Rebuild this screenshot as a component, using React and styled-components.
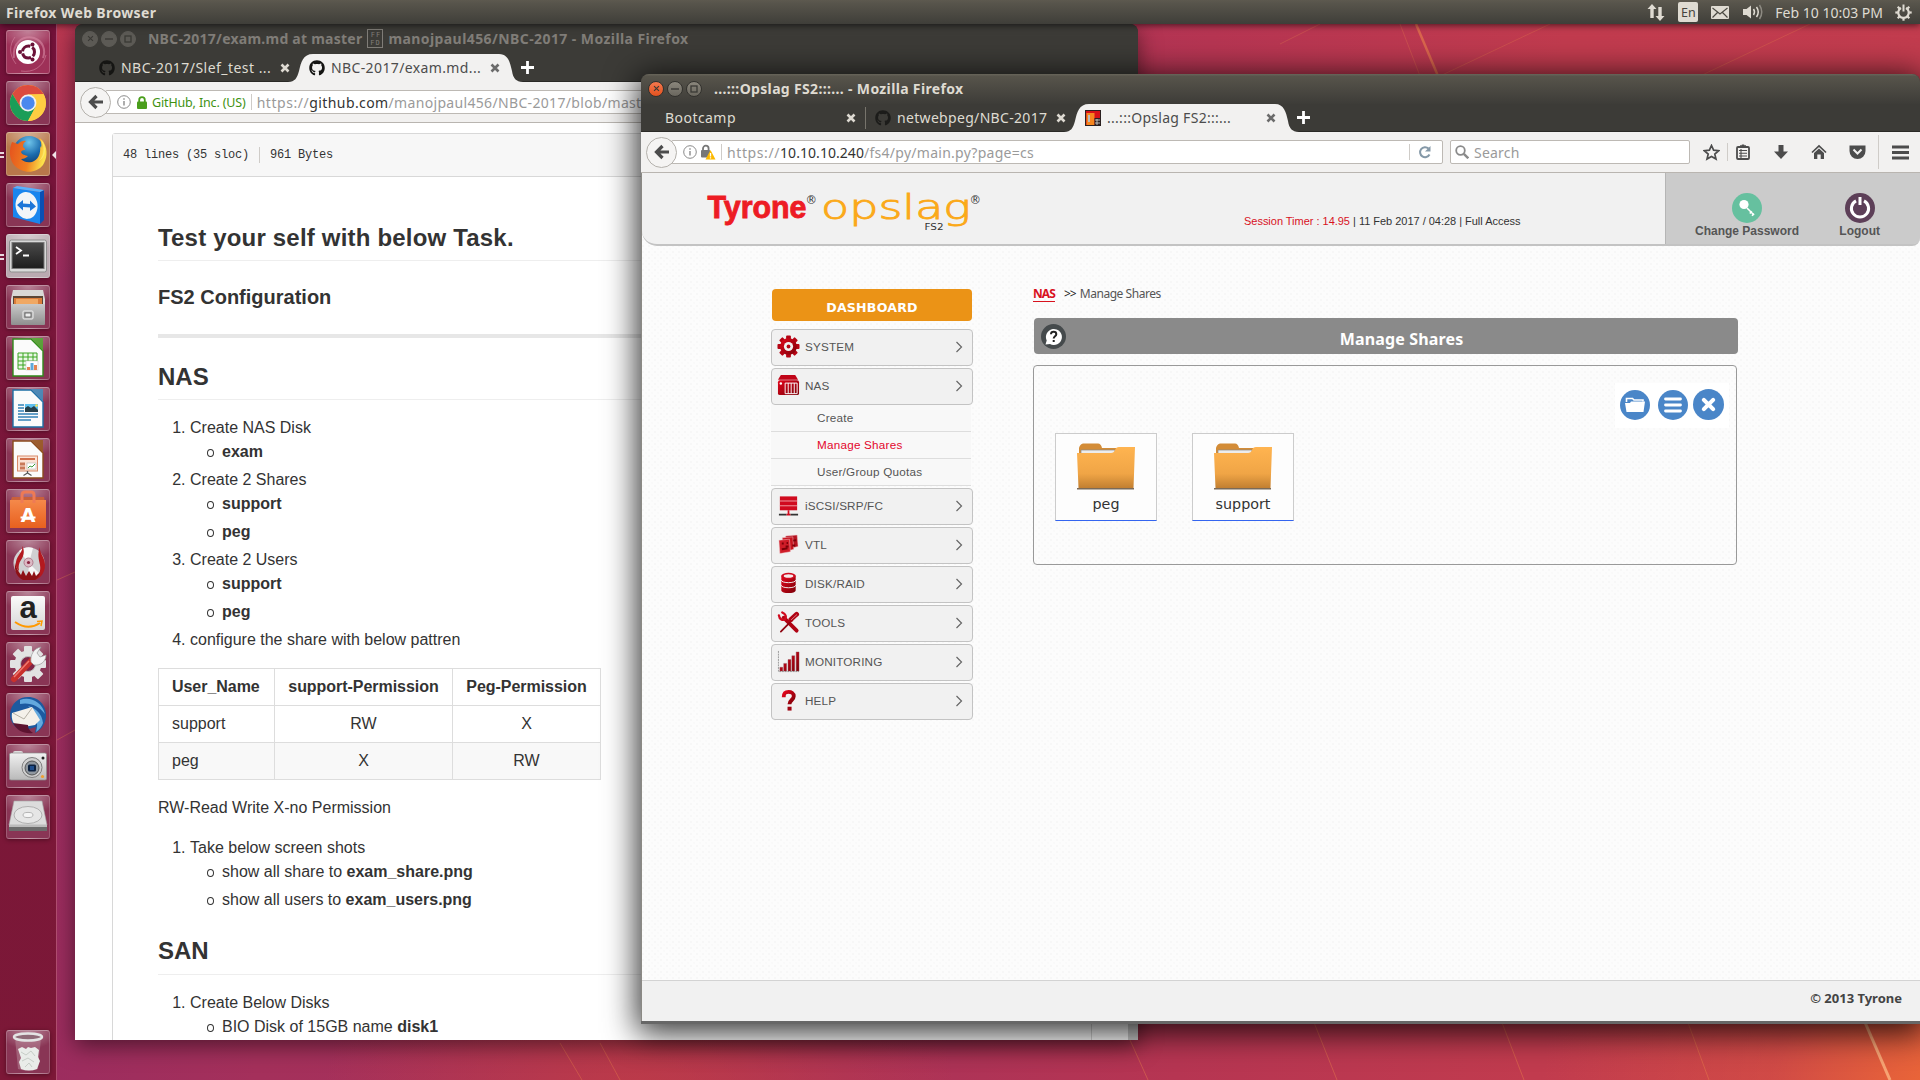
import React from 'react';
import styled, { createGlobalStyle } from 'styled-components';
import { FaGithub } from 'react-icons/fa';

const UI = '"Noto Sans", "Open Sans", sans-serif';
const SANS = '"Liberation Sans", Arial, sans-serif';

const Global = createGlobalStyle`
  *, *::before { box-sizing: border-box; }
  body { margin: 0; background: #7a1639; font-family: ${UI}; overflow: hidden; }
  svg { display: block; flex: none; }
`;

/* ---------- desktop ---------- */
const Desktop = styled.div`
  position: relative;
  width: 1920px;
  height: 1080px;
  overflow: hidden;
  display: flex;
  flex-direction: column;
  background:
    radial-gradient(circle 420px at 1960px 1110px, rgba(244, 112, 50, 0.95), rgba(226, 92, 60, 0.45) 45%, transparent),
    radial-gradient(circle 320px at 640px 1130px, rgba(205, 66, 58, 0.6), transparent),
    radial-gradient(ellipse 60px 260px at 60px 20px, rgba(200, 60, 75, 0.75), transparent),
    linear-gradient(92deg, #982b60 0%, #a4305b 15%, #aa3259 45%, #b63552 62%, #c13b4e 80%, #c23c4e 100%);
`;
const Rays = styled.svg`
  position: absolute;
  inset: 0;
`;
const TopPanel = styled.header`
  position: relative;
  z-index: 5;
  height: 24px;
  padding: 0 8px 0 6px;
  display: flex;
  align-items: center;
  justify-content: space-between;
  color: #dfdbd2;
  background: linear-gradient(#5d594f, #57544b 15%, #3f3e39);
  box-shadow: 0 1px 7px rgba(0, 0, 0, 0.65);
`;
const Text = styled.span`
  font-size: ${(p) => p.$size || 14}px;
  font-weight: ${(p) => (p.$bold ? 700 : 400)};
  letter-spacing: ${(p) => p.$ls || 0}px;
  color: ${(p) => p.$color || 'inherit'};
  white-space: pre;
`;
const Indicators = styled.div`
  display: flex;
  align-items: center;
`;
const Indicator = styled.div`
  margin-right: ${(p) => p.$after || 0}px;
`;
const Keyboard = styled.div`
  width: 20px;
  height: 20px;
  margin-right: 13px;
  border-radius: 2px;
  background: #dfdbd2;
  color: #45433d;
  font-size: 12.5px;
  line-height: 21px;
  text-align: center;
`;
const Launcher = styled.nav`
  position: relative;
  z-index: 4;
  width: 57px;
  flex: 1;
  padding: 6px 6px 6px;
  display: flex;
  flex-direction: column;
  gap: 7px;
  background: linear-gradient(#74123a, #79163a 30%, #7c1837);
  border-right: 1px solid rgba(225, 130, 165, 0.5);
`;
const Tile = styled.div`
  position: relative;
  width: 44px;
  height: 44px;
  flex: none;
  display: grid;
  place-items: center;
  border-radius: 3px;
  border: 1px solid rgba(255, 255, 255, 0.18);
  border-top-color: rgba(255, 255, 255, 0.45);
  background: radial-gradient(ellipse 30px 18px at 50% 0, rgba(255, 255, 255, 0.45), rgba(255, 255, 255, 0.08)), ${(p) => p.$bg || '#7f2446'};
  box-shadow: 0 1px 4px rgba(30, 0, 10, 0.45);
  ${(p) => (p.$last ? 'margin-top: auto;' : '')}
`;
const Pips = styled.div`
  position: absolute;
  left: -7px;
  top: 19px;
  width: 4px;
  height: 6px;
  border-top: 2px solid #e8d8de;
  border-bottom: 2px solid #e8d8de;
`;
const Focus = styled.div`
  position: absolute;
  right: -7px;
  top: 18px;
  border: 4px solid transparent;
  border-left: 0;
  border-right: 4px solid #f0e4e8;
`;

/* ---------- windows ---------- */
const Window = styled.section`
  position: absolute;
  left: ${(p) => p.$x}px;
  top: ${(p) => p.$y}px;
  width: ${(p) => p.$w}px;
  height: ${(p) => p.$h}px;
  z-index: ${(p) => (p.$active ? 3 : 2)};
  display: flex;
  flex-direction: column;
  border-radius: 8px 8px 0 0;
  background: #3c3b37;
  ${(p) => (p.$active ? 'border-bottom: 3px solid #676767;' : '')}
  box-shadow: ${(p) => (p.$active ? '0 5px 32px 4px rgba(0,0,0,0.8)' : '0 6px 22px rgba(0,0,0,0.5)')};
`;
const TitleBar = styled.div`
  height: 30px;
  padding: 0 0 1px 7px;
  display: flex;
  align-items: center;
  gap: 3px;
  border-radius: 8px 8px 0 0;
  color: ${(p) => (p.$active ? '#dfdbd2' : '#807d78')};
  background: ${(p) => (p.$active ? 'linear-gradient(#68655a, #57544b 8%, #3d3c38)' : '#3c3b37')};
`;
const WinButton = styled.div`
  width: 16px;
  height: 16px;
  border-radius: 50%;
  display: grid;
  place-items: center;
  color: #3a3935;
  background: ${(p) => (p.$close ? 'linear-gradient(#f4784e, #e2521f)' : p.$active ? 'linear-gradient(#8a867c, #6a675e)' : '#5c5a55')};
  border: 1px solid ${(p) => (p.$active ? '#33322e' : '#5c5a55')};
`;
const WinTitle = styled.div`
  margin: 0 0 1px 9px;
  display: flex;
  align-items: center;
  gap: 5px;
`;
const MissingGlyph = styled.span`
  width: 16px;
  height: 19px;
  padding-top: 1px;
  border: 1px solid currentColor;
  font: 7px/8px "DejaVu Sans Mono", monospace;
  letter-spacing: 1px;
  text-indent: 1px;
  text-align: center;
`;
const TabStrip = styled.div`
  height: 28px;
  padding-left: 14px;
  display: flex;
  border-bottom: 1px solid #2a2926;
`;
const TabBox = styled.div`
  position: relative;
  width: 210px;
  height: 28px;
  padding: 0 9px 0 10px;
  display: flex;
  align-items: center;
  color: ${(p) => (p.$active ? '#4c4c4c' : '#dfdbd2')};
`;
const TabShape = styled.svg`
  position: absolute;
  left: -11px;
  top: 0;
`;
const TabInner = styled.div`
  position: relative;
  flex: 1;
  margin-top: -1px;
  display: flex;
  align-items: center;
  gap: 6px;
`;
const TabClose = styled.div`
  margin-left: auto;
  color: ${(p) => (p.$active ? '#6b6b6b' : '#dedad2')};
`;
const TabRule = styled.div`
  width: 1px;
  height: 22px;
  margin: 3px -1px 0 0;
  background: #77746c;
`;
const NewTab = styled.div`
  margin: 7px 0 0 12px;
`;
const ToolBar = styled.div`
  height: 41px;
  padding: 0 12px 0 5px;
  display: flex;
  align-items: center;
  background: #f2f1f0;
  border-bottom: 1px solid #b9b5b0;
`;
const Back = styled.div`
  position: relative;
  z-index: 1;
  width: 31px;
  height: 31px;
  flex: none;
  border-radius: 50%;
  border: 1px solid #b4b1ac;
  background: #f5f4f3;
  display: grid;
  place-items: center;
`;
const Field = styled.div`
  height: 24px;
  width: ${(p) => p.$w}px;
  flex: none;
  margin-left: ${(p) => p.$ml}px;
  padding-left: ${(p) => p.$pl}px;
  display: flex;
  align-items: center;
  border: 1px solid #bdb9b4;
  border-radius: 2px;
  background: #fff;
  color: #9a9a9a;
`;
const Glyph = styled.div`
  margin: 0 ${(p) => p.$r || 0}px 0 ${(p) => p.$l || 0}px;
`;
const Rule = styled.div`
  width: 1px;
  height: ${(p) => p.$h || 16}px;
  margin: 0 ${(p) => p.$r || 0}px 0 ${(p) => p.$l || 0}px;
  background: #cfccc8;
`;
const Reload = styled.div`
  margin-left: auto;
  display: flex;
  align-items: center;
  gap: 8px;
  padding-right: 10px;
`;
const ToolIcons = styled.div`
  flex: 1;
  display: flex;
  align-items: center;
  margin-left: 13px;
`;

/* ---------- readme page ---------- */
const Page = styled.div`
  flex: 1;
  min-height: 0;
  display: flex;
  background: #fff;
  overflow: hidden;
`;
const Scroll = styled.div`
  width: 10px;
  background: #cecece;
`;
const FileBox = styled.div`
  flex: 1;
  margin: 10px 36px -10px 37px;
  border: 1px solid #d8d8d8;
  border-radius: 3px;
`;
const FileHeader = styled.div`
  height: 43px;
  padding-left: 10px;
  display: flex;
  align-items: center;
  background: #f7f7f7;
  border-bottom: 1px solid #d8d8d8;
  font-family: "Liberation Mono", monospace;
  color: #333;
`;
const Markdown = styled.article`
  padding: 46px 45px 45px;
  font: 16px/24px ${SANS};
  color: #333;
  > :first-child { margin-top: 0; }
`;
const H2 = styled.h2`
  margin: 24px 0 16px;
  padding-bottom: 7.2px;
  font-size: 24px;
  line-height: 30px;
  letter-spacing: ${(p) => p.$ls || 0}px;
  border-bottom: 1px solid #eee;
`;
const H3 = styled.h3`
  margin: 24px 0 16px;
  font-size: 20px;
  line-height: 25px;
`;
const Hr = styled.hr`
  height: 4px;
  margin: 24px 0;
  border: 0;
  background: #e7e7e7;
`;
const Ol = styled.ol`
  margin: 0 0 16px;
  padding-left: 32px;
  li + li { margin-top: 4px; }
`;
const Ul = styled.ul`
  margin: 0;
  padding-left: 32px;
  list-style: none;
  li::before {
    content: '';
    display: inline-block;
    width: 7px;
    height: 8px;
    margin: 0 8px 0 -15px;
    border: 1px solid #333;
    border-radius: 50%;
  }
`;
const Table = styled.table`
  width: 443px;
  table-layout: fixed;
  border-collapse: collapse;
  margin: 0 0 16px;
  tr:last-child td { background: #f8f8f8; }
`;
const Cell = styled.td`
  width: ${(p) => p.$w}px;
  height: 37px;
  padding: 6px 13px 6px;
  border: 1px solid #ddd;
  text-align: ${(p) => (p.$left ? 'left' : 'center')};
  font-weight: ${(p) => (p.$head ? 700 : 400)};
  letter-spacing: ${(p) => (p.$head ? -0.04 : 0)}px;
  white-space: nowrap;
`;
const P = styled.p`
  margin: 0 0 16px;
`;

/* ---------- storage console ---------- */
const Console = styled.div`
  flex: 1;
  min-height: 0;
  display: flex;
  flex-direction: column;
  border-left: 1px solid #8b8984;
  font-family: ${SANS};
  background:
    radial-gradient(circle 1px at 1px 1px, #f7f7f7 70%, transparent) 0 0 / 6px 6px,
    radial-gradient(circle 1px at 4px 4px, #f9f9f9 70%, transparent) 0 0 / 6px 6px, #fcfcfc;
`;
const Banner = styled.div`
  height: 73px;
  display: flex;
  background: #f1f1f1;
  border-bottom: 2px solid #c3c3c3;
  border-radius: 0 0 8px 15px;
`;
const Logo = styled.svg`
  margin: 15px 0 0 64px;
  overflow: visible;
`;
const Session = styled.div`
  margin: 42px 0 0 auto;
  width: 421px;
  font-size: 11px;
  line-height: 13px;
  letter-spacing: -0.02px;
  color: #333;
  white-space: pre;
`;
const Red = styled.span`
  color: #d8121e;
`;
const Account = styled.div`
  width: 255px;
  padding: 20px 40px 0 29px;
  display: flex;
  justify-content: space-between;
  background: #cbcbcb;
  border-left: 1px solid #b5b5b5;
  border-radius: 0 0 6px 0;
`;
const AccountLink = styled.div`
  display: flex;
  flex-direction: column;
  align-items: center;
  gap: 1px;
  font-size: 12px;
  line-height: 14px;
  font-weight: 700;
  color: #555;
`;
const Body = styled.div`
  flex: 1;
  display: flex;
  align-items: flex-start;
  padding-left: 129px;
  gap: 60px;
`;
const Side = styled.aside`
  width: 202px;
  margin-top: 43px;
`;
const Dashboard = styled.div`
  height: 32px;
  margin: 0 1px 8px;
  padding-top: 4px;
  border-radius: 4px;
  background: #eb9316;
  color: #fff;
  font: 700 12.6px/30px "DejaVu Sans", sans-serif;
  letter-spacing: 0.2px;
  text-align: center;
`;
const MenuItem = styled.div`
  height: 37px;
  margin-bottom: 2px;
  padding: 0 9px 2px 5px;
  display: flex;
  align-items: center;
  border: 1px solid #c3c3c3;
  border-radius: 4px;
  background: #f1f1f1;
  font-size: 11.7px;
  letter-spacing: 0.17px;
  color: #555;
  svg:last-child { margin-left: auto; }
`;
const MenuLabel = styled.span`
  margin-left: 5px;
`;
const SubMenu = styled.div`
  margin: -2px 2px 2px 0;
  background: #f8f8f8;
`;
const SubItem = styled.div`
  height: 27px;
  padding-left: 46px;
  border-bottom: 1px solid #ddd;
  font-size: 11.7px;
  line-height: 26px;
  letter-spacing: 0.23px;
  color: ${(p) => (p.$on ? '#e3062c' : '#555')};
`;
const Main = styled.main`
  width: 705px;
  margin-top: 39px;
`;
const Crumbs = styled.div`
  height: 18px;
  margin-bottom: 15px;
  display: flex;
  font: 12px/18px ${UI};
  letter-spacing: -0.45px;
  color: #555;
`;
const CrumbLink = styled.b`
  height: 17px;
  letter-spacing: -0.9px;
  color: #d8121e;
  border-bottom: 1px solid #d8121e;
`;
const CrumbSep = styled.span`
  margin: 0 4px 0 9px;
  color: #222;
  letter-spacing: -1px;
`;
const Heading = styled.div`
  height: 36px;
  margin: 0 0 11px 1px;
  padding-left: 7px;
  display: flex;
  align-items: center;
  border-radius: 4px;
  background: #8a8a8a;
  color: #fff;
`;
const HeadingText = styled.h1`
  margin: 5px 1px 0 0;
  flex: 1;
  text-align: center;
  font: 700 16px/24px ${UI};
  letter-spacing: 0.15px;
`;
const Panel = styled.div`
  width: 704px;
  height: 200px;
  border: 1px solid #999;
  border-radius: 4px;
  padding: 17px 7px 0 21px;
`;
const Actions = styled.div`
  width: 114px;
  height: 45px;
  margin: 0 0 5px auto;
  padding: 0 5px 2px;
  display: flex;
  align-items: center;
  background: #fff;
  gap: 8px;
  svg:last-child { margin-left: -3px; }
`;
const Shares = styled.div`
  display: flex;
  gap: 35px;
`;
const Share = styled.div`
  width: 102px;
  height: 88px;
  padding-top: 8px;
  display: flex;
  flex-direction: column;
  align-items: center;
  gap: 4px;
  border: 1px solid #ccc;
  border-bottom-color: #3465f0;
  background: #fdfdfd;
  font: 14.3px/20px "DejaVu Sans", sans-serif;
  color: #333;
`;
const Footer = styled.footer`
  height: 41px;
  padding: 6px 18px 0 0;
  border-top: 1px solid #d3d3d3;
  background: #f1f1f1;
  text-align: right;
  font: 700 13px/22px ${UI};
  color: #444;
`;

/* ---------- launcher drawings ---------- */
const Dash = () => (
  <svg width="42" height="42" viewBox="0 0 42 42" fill="none">
    <path d="M7 27C5 12 16 4 27 7c9 3 12 12 9 20" stroke="#d98aa5" strokeWidth="2" opacity=".6" />
    <path d="M14 40c12 2 22-4 25-16M8 6c-6 8-6 18 1 27" stroke="#d98aa5" opacity=".55" />
    <circle cx="21" cy="21" r="12" fill="#fff" />
    <circle cx="21.5" cy="21" r="6" stroke="#6b1238" strokeWidth="3" strokeDasharray="10.5 2" strokeDashoffset="-6.5" />
    <circle cx="13" cy="21" r="2" fill="#6b1238" /><circle cx="25.5" cy="13.6" r="2" fill="#6b1238" /><circle cx="25.5" cy="28.4" r="2" fill="#6b1238" />
  </svg>
);
const Chrome = () => (
  <svg width="38" height="38" viewBox="-19 -19 38 38">
    <circle r="18" fill="#ffcd42" />
    <path d="M-15.6-9A18 18 0 0 1 15.6-9L0-8.5-7.4 4.3z" fill="#dc4b3e" />
    <path d="M-15.6-9A18 18 0 0 0 0 18L7.4 4.3H-7.4z" fill="#1b9d58" />
    <path d="M15.7-8.5H0L7.4 4.3 0 18A18 18 0 0 0 15.7-8.5z" fill="#ffcd42" />
    <circle r="8.4" fill="#f1f1f1" /><circle r="6.7" fill="#4a88ee" />
  </svg>
);
const Firefox = () => (
  <svg width="40" height="40" viewBox="0 0 40 40">
    <defs>
      <radialGradient id="ffb" cx=".5" cy=".2" r=".8"><stop offset="0" stopColor="#6fc4ea" /><stop offset=".5" stopColor="#1c6cae" /><stop offset="1" stopColor="#0b2b5c" /></radialGradient>
      <linearGradient id="ffo" x1="0" y1="0" x2="1" y2=".2"><stop offset="0" stopColor="#e4501e" /><stop offset=".6" stopColor="#f08020" /><stop offset="1" stopColor="#fce04a" /></linearGradient>
    </defs>
    <circle cx="21" cy="18" r="16" fill="url(#ffb)" />
    <path d="M4 8c-3 7-3 17 2 23 8 9 22 9 29 0 4-6 5-15 1-22-1-3-4-5-5-5 2 3 3 6 2 10l-1-2c1 8-2 14-8 16-6 1-9-1-11-3 3 0 5-1 7-3-3-1-6-1-7-4 1-2 3-2 4-2 0-2-1-2-2-3 0-2 0-4 3-6-3-1-6 1-8 3-2-1-4-1-6-2z" fill="url(#ffo)" />
    <path d="M32 5c5 6 5 16-1 22 6-3 8-12 4-19z" fill="#fde86b" />
  </svg>
);
const TeamViewer = () => (
  <svg width="40" height="40" viewBox="0 0 40 40">
    <path d="M5 3l27 4v32L5 32z" fill="#1a86ee" /><path d="M32 7l4-2v30l-4 4z" fill="#0b4fb4" /><path d="M5 3l27 4 4-2L9 1z" fill="#58b2ff" />
    <ellipse cx="18.5" cy="20.5" rx="11" ry="13.5" fill="#f2f5f8" transform="rotate(-6 18 20)" />
    <path d="M9 20l6-5v3.5l7 .5v-3.5l6 6-6 4.5v-3.5l-7-.5v3.5z" fill="#1d76d8" />
  </svg>
);
const Terminal = () => (
  <svg width="40" height="38" viewBox="0 0 40 38">
    <defs><linearGradient id="tm" x2="0" y2="1"><stop stopColor="#4a4a4a" /><stop offset="1" stopColor="#1d1d1d" /></linearGradient></defs>
    <rect x="1.5" y="3" width="37" height="32" rx="2" fill="#d8d8d8" stroke="#8f8f8f" />
    <rect x="4" y="5.5" width="32" height="26" fill="url(#tm)" stroke="#777" />
    <path d="M8 10l5 3.5L8 17M15 18.5h6" stroke="#fff" strokeWidth="1.8" fill="none" />
  </svg>
);
const Files = () => (
  <svg width="38" height="40" viewBox="0 0 38 40">
    <defs><linearGradient id="fl" x2="0" y2="1"><stop stopColor="#c9c9c9" /><stop offset="1" stopColor="#8f8f8f" /></linearGradient></defs>
    <path d="M4 3h30l2 9v25H2V12z" fill="#d9d8d6" /><rect x="4" y="9" width="30" height="9" fill="#5b4636" />
    <path d="M5 11h28v6H5z" fill="#d97c3a" /><path d="M7 12h22v5H7z" fill="#f0a863" />
    <rect x="2" y="17" width="34" height="21" rx="1" fill="url(#fl)" />
    <rect x="14" y="24" width="10" height="8" rx="1" fill="#aaa" stroke="#eee" /><rect x="16" y="26" width="6" height="4" fill="#eee" stroke="#555" strokeWidth=".8" />
  </svg>
);
const Doc = ({ c, d, children }) => (
  <svg width="34" height="42" viewBox="0 0 34 42">
    <path d="M2 2h18l12 12v25H2z" fill="#fbfbfb" stroke={d} strokeWidth="1.4" /><path d="M20 1h12v13z" fill={c} opacity=".85" />
    {children}
  </svg>
);
const Calc = () => (
  <Doc c="#4fae30" d="#2f8a1a">
    <path d="M7 16h19v16H7zM7 20h19M7 24h19M7 28h19M12 16v16M17 16v16M22 16v16" stroke="#3ba521" fill="#eaf7e6" />
    <rect x="15" y="24" width="12" height="9" fill="#fff" stroke="#ccc" strokeWidth=".6" />
    <path d="M16 33v-3h3v3zM23 33v-5h3v5z" fill="#e48352" /><path d="M19.5 33v-7h3v7z" fill="#5ea8da" />
  </Doc>
);
const Writer = () => (
  <Doc c="#3f8fc0" d="#1d6fa5">
    <path d="M7 17h6M7 20h6M7 23h6M7 26h20M7 29h20M7 32h13" stroke="#3383b8" strokeWidth="1.6" />
    <rect x="14" y="16" width="13" height="8" fill="#5fc0ee" /><path d="M14 24v-4l3-2 3 2 3-2 4 4v2z" fill="#27404a" /><circle cx="25.5" cy="17.5" r="1.2" fill="#ffe14a" />
  </Doc>
);
const Impress = () => (
  <Doc c="#9a5a20" d="#8a4a1c">
    <rect x="6.5" y="17" width="20" height="15" fill="#fbe3d6" stroke="#d98a68" /><path d="M9 20h15" stroke="#c9532a" strokeWidth="1.6" />
    <path d="M9 25h5M9 29h5" stroke="#c97a5a" strokeWidth="3" /><rect x="16" y="24" width="9" height="6" fill="#fff" stroke="#aaa" strokeWidth=".5" />
    <path d="M17 29l2-2 2 1 3-3" stroke="#3b9c3b" fill="none" /><path d="M16.5 32v2l-4 2.5M16.5 34l4 2.5" stroke="#555" fill="none" strokeWidth="1.3" />
  </Doc>
);
const BagLetter = styled.text`
  font: 700 19px "DejaVu Sans", sans-serif;
`;
const Software = () => (
  <svg width="38" height="42" viewBox="0 0 38 42">
    <defs><linearGradient id="sw" x2="0" y2="1"><stop stopColor="#f5894a" /><stop offset="1" stopColor="#e8601f" /></linearGradient></defs>
    <path d="M3 7l32 0 1 6H1z" fill="#c9603a" /><path d="M1 10h36v28H1z" fill="url(#sw)" />
    <path d="M13 13V5q0-3 3-3h6q3 0 3 3v8" fill="none" stroke="#ee7a55" strokeWidth="3" />
    <BagLetter x="19" y="32" textAnchor="middle" fill="#fff">A</BagLetter><path d="M11.5 27.5h15" stroke="#fff" strokeWidth="2" />
  </svg>
);
const Burner = () => (
  <svg width="38" height="42" viewBox="0 0 38 42">
    <circle cx="20" cy="22" r="15.5" fill="#d0d0d2" /><path d="M20 22L10 10a15.5 15.5 0 0 1 14-3zM20 22l11 11a15.5 15.5 0 0 1-12 4z" fill="#f7f7f7" />
    <path d="M13 5c2 5-5 9-6 16-1 4 1 7 3 9-1-5 0-8 2-11 3-4 4-10 1-14z" fill="#b3191f" />
    <path d="M31 6c-1 6 5 10 5 18 0 8-5 14-11 15 5-4 7-9 6-15-1-5-3-11 0-18z" fill="#b3191f" />
    <path d="M6 22c-1 8 2 14 8 17h12c3-2 5-5 5-8l-4 4-2-5-2 5-3-5-3 5-3-6-2 5c-3-4-5-8-6-12z" fill="#8d1116" />
    <circle cx="19.5" cy="21.5" r="4.5" fill="#dcb9c4" stroke="#b07a8c" /><circle cx="19.5" cy="21.5" r="1.6" fill="#8a2340" />
  </svg>
);
const AmazonCard = styled.div`
  width: 34px;
  height: 34px;
  display: flex;
  flex-direction: column;
  align-items: center;
  border-radius: 2px;
  background: linear-gradient(#fafafa, #d6d6d6);
  color: #222;
`;
const AmazonLetter = styled.div`
  font: 700 31px/24px "Liberation Sans", sans-serif;
`;
const Settings = () => (
  <svg width="40" height="40" viewBox="0 0 40 40">
    <g transform="translate(20 20)" fill="#e2e2e2">
      {[0, 45, 90, 135, 180, 225, 270, 315].map((a) => <rect key={a} x="-4" y="-18" width="8" height="9" rx="1" transform={`rotate(${a})`} />)}
      <circle r="13.5" />
    </g>
    <circle cx="20" cy="20" r="7.5" fill="#7f2446" stroke="#bbb" />
    <path d="M6 35L23 17" stroke="#c9302c" strokeWidth="6" strokeLinecap="round" /><path d="M6 33L21 17" stroke="#ef7a70" strokeWidth="1.5" />
    <path d="M23 18c-1-7 3-14 10-15l-4 6 3 4 6-2c0 6-5 11-12 10z" fill="#f2f2f2" stroke="#999" strokeWidth=".7" />
  </svg>
);
const Thunderbird = () => (
  <svg width="40" height="42" viewBox="0 0 40 42">
    <path d="M2 20C3 9 11 3 20 3c12 0 19 10 18 20-1 8-5 13-11 16l1-6-14 4C7 34 2 28 2 20z" fill="#1c5aa0" />
    <path d="M12 6c9-4 22 1 25 14-6-8-15-12-25-10zM20 12c8 2 14 8 15 17-1 3-4 7-7 9 3-9 0-19-8-26z" fill="#63a9de" />
    <path d="M4 19l20-6 8 13-5 5-17 3C5 30 3 25 4 19z" fill="#f4f1ea" /><path d="M5 19l11 6 8-11" stroke="#b5b0a4" fill="none" />
    <path d="M5 29c4 8 11 11 20 10-3-2-5-4-5-8z" fill="#5d1330" />
  </svg>
);
const Camera = () => (
  <svg width="40" height="36" viewBox="0 0 40 36">
    <defs><linearGradient id="cm" x2="0" y2="1"><stop stopColor="#f1f1f1" /><stop offset="1" stopColor="#b9b9b9" /></linearGradient></defs>
    <rect x="5" y="3" width="10" height="5" rx="2" fill="#ddd" /><rect x="1.5" y="5" width="37" height="27" rx="1.5" fill="url(#cm)" stroke="#8d8d8d" strokeWidth=".7" />
    <circle cx="24" cy="19.5" r="10" fill="#d0d0d0" stroke="#808080" /><circle cx="24" cy="20" r="7" fill="#8f979f" stroke="#555" /><rect x="20" y="16.5" width="8" height="7" rx="1.5" fill="#0c2140" /><rect x="22" y="18" width="4" height="4" fill="#1e4d8c" />
    <circle cx="35" cy="10" r="1.5" fill="#222" /><circle cx="34.5" cy="28.5" r="1.6" fill="#f0a030" />
  </svg>
);
const Drive = () => (
  <svg width="40" height="36" viewBox="0 0 40 36">
    <path d="M6 2h28l5 24H1z" fill="#dcdcdc" stroke="#a5a5a5" strokeWidth=".6" /><path d="M1 26h38v6H1z" fill="#6c6c6c" /><path d="M1 26h38v2H1z" fill="#bbb" />
    <ellipse cx="20" cy="16" rx="14" ry="8.5" fill="#e6e6e6" stroke="#b0b0b0" /><ellipse cx="20" cy="16" rx="5" ry="2.6" fill="#f5f5f5" stroke="#b5b5b5" />
  </svg>
);
const Trash = () => (
  <svg width="36" height="42" viewBox="0 0 36 42">
    <path d="M5 7l3 31q10 3 20 0l3-31z" fill="#b98c9c" opacity=".5" /><ellipse cx="18" cy="6" rx="14" ry="3.5" fill="#8f6b78" stroke="#e4e4e4" strokeWidth="2.4" />
    <path d="M8 18l4-2 4 2 2-2 3 1 4-1 4 3-1 7 2 4-3 8q-8 3-16 0l-2-7 2-4z" fill="#e9ece9" /><path d="M11 21l5 3 5-4 4 5M12 30l6-3 6 4M15 36l4-4 3 4" stroke="#c6cdc7" fill="none" />
  </svg>
);

const apps = [
  { icon: <Dash />, bg: '#96204a' }, { icon: <Chrome /> }, { icon: <Firefox />, bg: '#b26d3c', pips: true, focus: true },
  { icon: <TeamViewer /> }, { icon: <Terminal />, bg: '#b4a3aa', pips: true }, { icon: <Files /> }, { icon: <Calc /> }, { icon: <Writer /> },
  { icon: <Impress /> }, { icon: <Software /> }, { icon: <Burner /> },
  {
    icon: (
      <AmazonCard>
        <AmazonLetter>a</AmazonLetter>
        <svg width="32" height="10" viewBox="0 0 32 10"><path d="M3 2q13 9 25 1" stroke="#f90" strokeWidth="2" fill="none" /><path d="M25 1.5l5-.5-1 5" stroke="#f90" strokeWidth="1.5" fill="none" /></svg>
      </AmazonCard>
    ),
  },
  { icon: <Settings /> }, { icon: <Thunderbird /> }, { icon: <Camera /> }, { icon: <Drive /> }, { icon: <Trash />, last: true },
];

/* ---------- window chrome drawings ---------- */
const Cross = ({ s = 10, w = 2.6 }) => (
  <svg width={s} height={s} viewBox="0 0 10 10"><path d="M1.5 1.5l7 7M8.5 1.5l-7 7" stroke="currentColor" strokeWidth={w} /></svg>
);
const Controls = ({ active }) => (
  <>
    <WinButton $close={active} $active={active}><Cross s={7} w={1.6} /></WinButton>
    <WinButton $active={active}><svg width="8" height="8"><path d="M0 4h8" stroke="currentColor" strokeWidth="1.4" /></svg></WinButton>
    <WinButton $active={active}><svg width="8" height="8"><rect x="1" y="1" width="6" height="6" fill="none" stroke="currentColor" strokeWidth="1.3" /></svg></WinButton>
  </>
);
const Tab = ({ active, icon, label, ls }) => (
  <TabBox $active={active}>
    {active && (
      <TabShape width="235" height="28" viewBox="0 0 235 28">
        <path d="M0 28c7 0 9-4 11-11C13 8 15 0 25 0H211c9 0 11 8 13 17 1 7 4 11 11 11z" fill="#f2f1f0" />
      </TabShape>
    )}
    <TabInner>
      {icon}
      <Text $ls={ls}>{label}</Text>
      <TabClose $active={active}><Cross /></TabClose>
    </TabInner>
  </TabBox>
);
const Plus = () => (
  <NewTab><svg width="13" height="13"><path d="M6.5 0v13M0 6.5h13" stroke="#fff" strokeWidth="2.8" /></svg></NewTab>
);
const BackArrow = () => (
  <Back><svg width="16" height="16" viewBox="0 0 16 16"><path d="M8.5 2L2.5 8l6 6M3 8h12" stroke="#4c4c4c" strokeWidth="3.2" fill="none" /></svg></Back>
);
const Info = () => (
  <svg width="14" height="14" viewBox="0 0 14 14"><circle cx="7" cy="7" r="6.3" fill="none" stroke="#8a8a8a" /><path d="M7 6v4.5M7 3.3v1.5" stroke="#8a8a8a" strokeWidth="1.4" /></svg>
);
const BrandIcon = () => (
  <svg width="16" height="16" viewBox="0 0 16 16"><rect width="16" height="16" fill="#2b2020" /><rect x="1" y="1" width="14" height="14" fill="#d61118" /><rect x="1.5" y="3" width="8" height="12" fill="#f6861f" /><path d="M4 5v7" stroke="#bbb" strokeWidth="2" /><path d="M9.500 8h6v7.500h-6z" fill="#2b2020" /><path d="M10 10h5M10 13h5M12 9v6" stroke="#ddd" strokeWidth=".8" /></svg>
);

/* ---------- console drawings ---------- */
const RED = 'url(#menuRed)';
const MenuDefs = () => (
  <svg width="0" height="0"><defs><linearGradient id="menuRed" x1="0" y1="0" x2="1" y2="1"><stop stopColor="#e2061c" /><stop offset="1" stopColor="#7c0008" /></linearGradient></defs></svg>
);
const menuArt = {
  SYSTEM: (
    <g transform="translate(12 12)">{[0, 45, 90, 135, 180, 225, 270, 315].map((a) => <rect key={a} x="-2.5" y="-11.5" width="5" height="6" rx="1" fill="#b50414" transform={`rotate(${a})`} />)}<circle r="8.7" fill={RED} /><circle r="4.8" fill="#f1f1f1" /><circle r="2" fill="#b50414" /></g>
  ),
  NAS: (
    <g><path d="M4 1h15l3 5H1z" fill="#c00418" /><rect x="1" y="6.5" width="22" height="15.5" rx="2" fill={RED} /><path d="M8.5 9.5h12.5v11H8.5zM11.7 9.5v11M14.8 9.5v11M18 9.5v11" stroke="#fff" fill="none" /><circle cx="4" cy="10" r="1.3" fill="#fff" /></g>
  ),
  'iSCSI/SRP/FC': (
    <g><path d="M3 2.500h18v14.500H3z" fill="#d00a1e" /><path d="M3 7.300h18M3 12.300h18" stroke="#f0a0a6" strokeWidth="1" /><path d="M2 21.500h8M14 21.500h8" stroke="#333" strokeWidth="2" /><path d="M12 17v5.500M10 21.500h4" stroke="#d00a1e" strokeWidth="1.8" /></g>
  ),
  VTL: (
    <g stroke="#f3c9cc" strokeWidth=".5"><path d="M9 3l12-1 1 12-12 3z" fill="#b51421" /><path d="M5.500 5l11-1 1 13-11 3z" fill="#c8141f" /><path d="M2 7.500l11-1 1 13-11 2z" fill="#cf1c28" /><path d="M5 11h2M10 10.500h1.500M5 17l6-1M17 8l3-.5M9 14h3M16 13h3" stroke="#7c0008" strokeWidth="2" /></g>
  ),
  'DISK/RAID': (
    <g><path d="M4.500 4v15c0 4 15 4 15 0V4z" fill={RED} /><ellipse cx="12" cy="4" rx="7.5" ry="3.2" fill="#d00a1e" /><ellipse cx="12" cy="4.2" rx="5" ry="1.9" fill="#f6eaea" /><path d="M4.500 8.5c0 3.500 15 3.500 15 0M4.500 13.8c0 3.500 15 3.500 15 0" stroke="#f1f1f1" fill="none" /></g>
  ),
  TOOLS: (
    <g fill="none" strokeLinecap="round"><path d="M20.500 20.500L7 7" stroke="#b00414" strokeWidth="4" /><path d="M2 4.500C2.500 9 6 10 8.500 8.500 10 6 9 3 5.500 1.500" stroke="#d00a1e" strokeWidth="2.4" /><path d="M4 21.500l9-9" stroke="#8e0410" strokeWidth="1.8" /><path d="M14.500 9l6-5.500" stroke="#b00414" strokeWidth="5" /><path d="M15 9l5.500-5M17 10l4-3.500" stroke="#f1d5d5" strokeWidth=".6" /></g>
  ),
  MONITORING: (
    <g><path d="M1.500 1v21.500H23" stroke="#999" fill="none" strokeDasharray="2 .8" /><path d="M3 22v-4h3v4zM7 22v-8h3v8zM11.500 22V10h3v12zM15.500 22V6h3v16zM20 22V2h3v20z" fill={RED} stroke="#8b5a5e" strokeWidth=".4" /></g>
  ),
  HELP: (
    <g><path d="M7 8.500C7 4 9 3 12 3s5.500 1.500 5.500 4.500c0 4-4.500 4-4.500 8.500" stroke={RED} strokeWidth="4" fill="none" /><rect x="11" y="18.5" width="4.2" height="4" fill="#a00412" /></g>
  ),
};
const Item = ({ label }) => (
  <MenuItem>
    <svg width="23" height="23" viewBox="0 0 24 24">{menuArt[label]}</svg>
    <MenuLabel>{label}</MenuLabel>
    <svg width="8" height="12" viewBox="0 0 8 12"><path d="M1.5 1l5 5-5 5" stroke="#666" strokeWidth="1.2" fill="none" /></svg>
  </MenuItem>
);
const Folder = () => (
  <svg width="60" height="48" viewBox="0 0 60 48">
    <defs><linearGradient id="fo" x2="0" y2="1"><stop stopColor="#ffb450" /><stop offset=".65" stopColor="#f0a546" /><stop offset="1" stopColor="#c27f31" /></linearGradient></defs>
    <path d="M3 14V6q1-4 4-4.500h15q3 0 4 4.500h14v8z" fill="#d38c37" /><path d="M5 8h34v5H5z" fill="#ececec" stroke="#8a8a8a" strokeWidth=".7" />
    <path d="M1 46h57v1.500H1z" fill="#7b6a58" /><path d="M1 11h34q3 0 4-3t4-3h16l-1.500 41h-55z" fill="url(#fo)" />
  </svg>
);
const Disc = ({ s, children }) => (
  <svg width={s} height={s} viewBox="0 0 30 30"><circle cx="15" cy="15" r="15" fill="#4a86c8" />{children}</svg>
);
const Tyrone = styled.text`
  font: 700 31px "Liberation Sans", sans-serif;
  fill: #ed1c24;
  stroke: #ed1c24;
  stroke-width: 0.9px;
`;
const Opslag = styled.text`
  font: 200 33.5px "DejaVu Sans", sans-serif;
  fill: #fba919;
  stroke: #fba919;
  stroke-width: 0.9px;
`;
const LogoSmall = styled.text`
  font: ${(p) => p.$size}px "DejaVu Sans", sans-serif;
  fill: #333;
`;

const ReadmeWindow = () => (
  <Window $x={75} $y={24} $w={1063} $h={1016}>
    <TitleBar>
      <Controls />
      <WinTitle>
        <Text $bold $ls={0.24}>NBC-2017/exam.md at master</Text>
        <MissingGlyph>FF FD</MissingGlyph>
        <Text $bold $ls={0.42}>manojpaul456/NBC-2017 - Mozilla Firefox</Text>
      </WinTitle>
    </TitleBar>
    <TabStrip>
      <Tab icon={<FaGithub size={16} color="#151513" />} label="NBC-2017/Slef_test ..." ls={0.46} />
      <Tab active icon={<FaGithub size={16} color="#151513" />} label="NBC-2017/exam.md..." ls={0.38} />
      <Plus />
    </TabStrip>
    <ToolBar>
      <BackArrow />
      <Field $w={1000} $ml={-6} $pl={11}>
        <Info />
        <Glyph $l={6} $r={5}>
          <svg width="10" height="13" viewBox="0 0 10 13"><path d="M2.2 6V4a2.8 2.8 0 0 1 5.6 0v2" fill="none" stroke="#4a9e1c" strokeWidth="1.8" /><rect y="5.5" width="10" height="7.5" rx="1" fill="#4a9e1c" /></svg>
        </Glyph>
        <Text $size={12.5} $ls={-0.15} $color="#3f9212">GitHub, Inc. (US)</Text>
        <Rule $l={5} $r={5} />
        <Text $ls={0.55}>https://</Text><Text $ls={0.4} $color="#333">github.com</Text><Text $ls={0.33}>/manojpaul456/NBC-2017/blob/master/exam.md</Text>
      </Field>
    </ToolBar>
    <Page>
      <FileBox>
        <FileHeader>
          <Text $size={12} $ls={-0.2}>48 lines (35 sloc)</Text>
          <Rule $l={10} $r={10} />
          <Text $size={12} $ls={-0.2}>961 Bytes</Text>
        </FileHeader>
        <Markdown>
          <H2 $ls={0.19}>Test your self with below Task.</H2>
          <H3>FS2 Configuration</H3>
          <Hr />
          <H2>NAS</H2>
          <Ol>
            <li>Create NAS Disk<Ul><li><b>exam</b></li></Ul></li>
            <li>Create 2 Shares<Ul><li><b>support</b></li><li><b>peg</b></li></Ul></li>
            <li>Create 2 Users<Ul><li><b>support</b></li><li><b>peg</b></li></Ul></li>
            <li>configure the share with below pattren</li>
          </Ol>
          <Table>
            <tbody>
              <tr><Cell $head $left $w={116}>User_Name</Cell><Cell $head $w={178}>support-Permission</Cell><Cell $head $w={148}>Peg-Permission</Cell></tr>
              <tr><Cell $left>support</Cell><Cell>RW</Cell><Cell>X</Cell></tr>
              <tr><Cell $left>peg</Cell><Cell>X</Cell><Cell>RW</Cell></tr>
            </tbody>
          </Table>
          <P>RW-Read Write X-no Permission</P>
          <Ol>
            <li>Take below screen shots<Ul><li>show all share to <b>exam_share.png</b></li><li>show all users to <b>exam_users.png</b></li></Ul></li>
          </Ol>
          <H2>SAN</H2>
          <Ol>
            <li>Create Below Disks<Ul><li>BIO Disk of 15GB name <b>disk1</b></li></Ul></li>
          </Ol>
        </Markdown>
      </FileBox>
      <Scroll />
    </Page>
  </Window>
);

const ConsoleWindow = () => (
  <Window $active $x={641} $y={74} $w={1279} $h={950}>
    <TitleBar $active>
      <Controls active />
      <WinTitle><Text $bold $ls={0.34}>...:::Opslag FS2:::... - Mozilla Firefox</Text></WinTitle>
    </TitleBar>
    <TabStrip>
      <Tab label="Bootcamp" ls={0.45} />
      <TabRule />
      <Tab icon={<FaGithub size={16} color="#1c1c1a" />} label="netwebpeg/NBC-2017" ls={0.32} />
      <Tab active icon={<BrandIcon />} label="...:::Opslag FS2:::..." ls={0.28} />
      <Plus />
    </TabStrip>
    <ToolBar>
      <BackArrow />
      <Field $w={772} $ml={-6} $pl={11}>
        <Info />
        <Glyph $l={3} $r={5}>
          <svg width="16" height="16" viewBox="0 0 16 16"><path d="M3 7V4.5a2.8 2.8 0 0 1 5.6 0V7" fill="none" stroke="#777" strokeWidth="1.8" /><rect x="1" y="6" width="9" height="7.5" rx="1" fill="#777" /><path d="M10.5 6l5 9.5h-10z" fill="#fcb900" /><path d="M10.5 9v3.5M10.5 13.3v1.2" stroke="#fff" strokeWidth="1.3" /></svg>
        </Glyph>
        <Rule $r={5} />
        <Text $ls={0.6}>https://</Text><Text $color="#333" $ls={0.05}>10.10.10.240</Text><Text $ls={0.27}>/fs4/py/main.py?page=cs</Text>
        <Reload>
          <Rule />
          <svg width="14" height="14" viewBox="0 0 14 14"><path d="M11.5 9.5A5 5 0 1 1 10.5 3.5" fill="none" stroke="#8599a8" strokeWidth="2" /><path d="M12.5 1v5.5H7z" fill="#8599a8" /></svg>
        </Reload>
      </Field>
      <Field $w={240} $ml={7} $pl={4}>
        <svg width="14" height="14" viewBox="0 0 14 14"><circle cx="5.5" cy="5.5" r="4.3" fill="none" stroke="#8a8a8a" strokeWidth="1.8" /><path d="M8.8 8.8l4.5 4.5" stroke="#8a8a8a" strokeWidth="2.4" /></svg>
        <Glyph $l={5} />
        <Text $ls={0.2}>Search</Text>
      </Field>
      <ToolIcons>
        <svg width="17" height="17" viewBox="0 0 17 17"><path d="M8.5 1.5l2.1 4.7 5.1.5-3.900 3.4 1.2 5-4.500-2.600-4.500 2.600 1.200-5L1.300 6.700l5.100-.5z" fill="none" stroke="#4c4c4c" strokeWidth="1.7" /></svg>
        <Rule $h={18} $l={7} $r={7} />
        <svg width="16" height="16" viewBox="0 0 16 16"><rect x="2" y="3" width="12" height="12" rx="1" fill="none" stroke="#4c4c4c" strokeWidth="1.8" /><path d="M5 2.5h6M8 .5v2" stroke="#4c4c4c" strokeWidth="2.4" /><path d="M4 6.5h8M4 9.3h8M4 12h8M6 5v9" stroke="#4c4c4c" strokeWidth="1.1" /></svg>
        <Glyph $l={22}><svg width="16" height="16" viewBox="0 0 16 16"><path d="M5.5 1h5v6.5H15L8 15 1 7.5h4.5z" fill="#4c4c4c" /></svg></Glyph>
        <Glyph $l={22}><svg width="16" height="16" viewBox="0 0 16 16"><path d="M1 8.5L8 2l7 6.5" fill="none" stroke="#4c4c4c" strokeWidth="1.7" /><path d="M3 9l5-4.5L13 9v6h-3.300v-4.500H6.300V15H3z" fill="#4c4c4c" /></svg></Glyph>
        <Glyph $l={22}><svg width="17" height="16" viewBox="0 0 17 16"><path d="M.5 1.5h16V7a8 8 0 0 1-16 0z" fill="#4c4c4c" /><path d="M4.5 5.500l4 4 4-4" fill="none" stroke="#f2f1f0" strokeWidth="2" /></svg></Glyph>
        <Rule $h={34} $l={12} $r={13} />
        <svg width="17" height="15" viewBox="0 0 17 15"><path d="M0 2h17M0 7.5h17M0 13h17" stroke="#4c4c4c" strokeWidth="2.8" /></svg>
      </ToolIcons>
    </ToolBar>
    <Console>
      <MenuDefs />
      <Banner>
        <Logo width="280" height="45" viewBox="0 0 280 45">
          <Tyrone x="1.500" y="30" textLength="99" lengthAdjust="spacingAndGlyphs">Tyrone</Tyrone>
          <LogoSmall $size={11.5} x="99.500" y="16">®</LogoSmall>
          <Opslag x="115" y="31" textLength="150" lengthAdjust="spacingAndGlyphs">opslag</Opslag>
          <LogoSmall $size={11.5} x="263.500" y="16">®</LogoSmall>
          <LogoSmall $size={9} x="218.500" y="41.500" textLength="19" lengthAdjust="spacingAndGlyphs">FS2</LogoSmall>
        </Logo>
        <Session><Red>Session Timer : 14.95</Red> | 11 Feb 2017 / 04:28 | Full Access</Session>
        <Account>
          <AccountLink>
            <svg width="30" height="30" viewBox="0 0 30 30"><circle cx="15" cy="15" r="15" fill="#66c09f" /><circle cx="12" cy="11.5" r="4.6" fill="#fff" /><path d="M15 15l7 7M17.8 20.5l2-2.2M20 22.8l2-2.2" stroke="#fff" strokeWidth="1.6" /></svg>
            Change Password
          </AccountLink>
          <AccountLink>
            <svg width="30" height="30" viewBox="0 0 30 30"><circle cx="15" cy="15" r="15" fill="#5d3f58" /><path d="M11 7.8a8.6 8.6 0 1 0 8 0" fill="none" stroke="#fff" strokeWidth="3" /><path d="M15 4v8" stroke="#fff" strokeWidth="3" /></svg>
            Logout
          </AccountLink>
        </Account>
      </Banner>
      <Body>
        <Side>
          <Dashboard>DASHBOARD</Dashboard>
          <Item label="SYSTEM" />
          <Item label="NAS" />
          <SubMenu>
            <SubItem>Create</SubItem>
            <SubItem $on>Manage Shares</SubItem>
            <SubItem>User/Group Quotas</SubItem>
          </SubMenu>
          {['iSCSI/SRP/FC', 'VTL', 'DISK/RAID', 'TOOLS', 'MONITORING', 'HELP'].map((l) => <Item key={l} label={l} />)}
        </Side>
        <Main>
          <Crumbs><CrumbLink>NAS</CrumbLink><CrumbSep>&gt;&gt;</CrumbSep>Manage Shares</Crumbs>
          <Heading>
            <svg width="25" height="25" viewBox="0 0 25 25"><circle cx="12.5" cy="12.5" r="12.5" fill="#454a4c" /><path d="M4.5 20.5l1.200-4A8 8 0 1 1 9 20z" fill="#fff" /><path d="M10 10.300c0-3.300 5.300-3.300 5.300 0 0 2-2.600 2-2.600 4.200M12.700 16v2" fill="none" stroke="#222" strokeWidth="2" /></svg>
            <HeadingText>Manage Shares</HeadingText>
          </Heading>
          <Panel>
            <Actions>
              <Disc s={30}><path d="M6.5 12V8.5h6l1.5 1.500h9v1.500" fill="none" stroke="#fff" strokeWidth="1.6" /><path d="M5 13h5l1-1.500h14L23.500 22h-17z" fill="#fff" /></Disc>
              <Disc s={30}><path d="M7.5 9h15M7.5 15h15M7.5 21h15" stroke="#fff" strokeWidth="2.8" strokeLinecap="round" /></Disc>
              <Disc s={31}><path d="M10.5 10.5l9 9M19.5 10.5l-9 9" stroke="#fff" strokeWidth="4" strokeLinecap="round" /></Disc>
            </Actions>
            <Shares>
              <Share><Folder />peg</Share>
              <Share><Folder />support</Share>
            </Shares>
          </Panel>
        </Main>
      </Body>
      <Footer>© 2013 Tyrone</Footer>
    </Console>
  </Window>
);

export default function App() {
  return (
    <Desktop>
      <Global />
      <Rays width="1920" height="1080" viewBox="0 0 1920 1080" fill="none" stroke="#f08a4a">
        <path d="M1416 24l22 52" strokeWidth="2.5" opacity=".55" /><path d="M1400 24l20 52M1280 44l40-20M1440 76l110-52M1700 76l110-52" opacity=".25" />
        <path d="M1864 1020l26 60" strokeWidth="3" stroke="#ffc08a" opacity=".7" /><path d="M1687 1020l22 60M1501 1020l23 60M1313 1020l24 60M1130 1040l18 40" opacity=".4" />
        <path d="M560 1043l22 37M600 1043l20 37M57 740l18-10M57 580l18-8" opacity=".35" />
      </Rays>
      <TopPanel>
        <Text $bold $ls={0.37}>Firefox Web Browser</Text>
        <Indicators>
          <Indicator $after={13}><svg width="18" height="17" viewBox="0 0 18 17"><path d="M5 0l4.5 5H6.7v9H3.300V5H.5zM13 17l-4.500-5h2.800V3h3.400v9h2.800z" fill="#dfdbd2" /></svg></Indicator>
          <Keyboard>En</Keyboard>
          <Indicator $after={14}><svg width="18" height="13" viewBox="0 0 18 13"><rect width="18" height="13" rx="1" fill="#dfdbd2" /><path d="M1.5 2l7.5 6 7.5-6M1.500 11.500L6.500 6.500M16.500 11.500l-5-5" stroke="#4b4942" strokeWidth="1.2" fill="none" /></svg></Indicator>
          <Indicator $after={12}><svg width="20" height="16" viewBox="0 0 20 16"><path d="M0 5h3.500L8 1.500v13L3.500 11H0z" fill="#dfdbd2" /><path d="M10.500 5q2 3 0 6M13.500 3q3.500 5 0 10" stroke="#dfdbd2" strokeWidth="1.5" fill="none" /><path d="M16.500 1q4.500 7 0 14" stroke="#8d8a82" strokeWidth="1.5" fill="none" /></svg></Indicator>
          <Text>Feb 10 10:03 PM</Text>
          <Indicator><svg width="29" height="17" viewBox="-20.5 -8.5 29 17"><g stroke="#dfdbd2" fill="none"><path d="M-2.500-4.500a5.300 5.300 0 1 0 5 0" strokeWidth="2.2" /><path d="M0-8v7" strokeWidth="2" />{[45, 90, 135, 180, 225, 270, 315].map((a) => <path key={a} d="M0-8.200v2.500" strokeWidth="2.2" transform={`rotate(${a})`} />)}</g></svg></Indicator>
        </Indicators>
      </TopPanel>
      <Launcher>
        {apps.map((a, i) => (
          <Tile key={i} $bg={a.bg} $last={a.last}>
            {a.pips && <Pips />}
            {a.icon}
            {a.focus && <Focus />}
          </Tile>
        ))}
      </Launcher>
      <ReadmeWindow />
      <ConsoleWindow />
    </Desktop>
  );
}
